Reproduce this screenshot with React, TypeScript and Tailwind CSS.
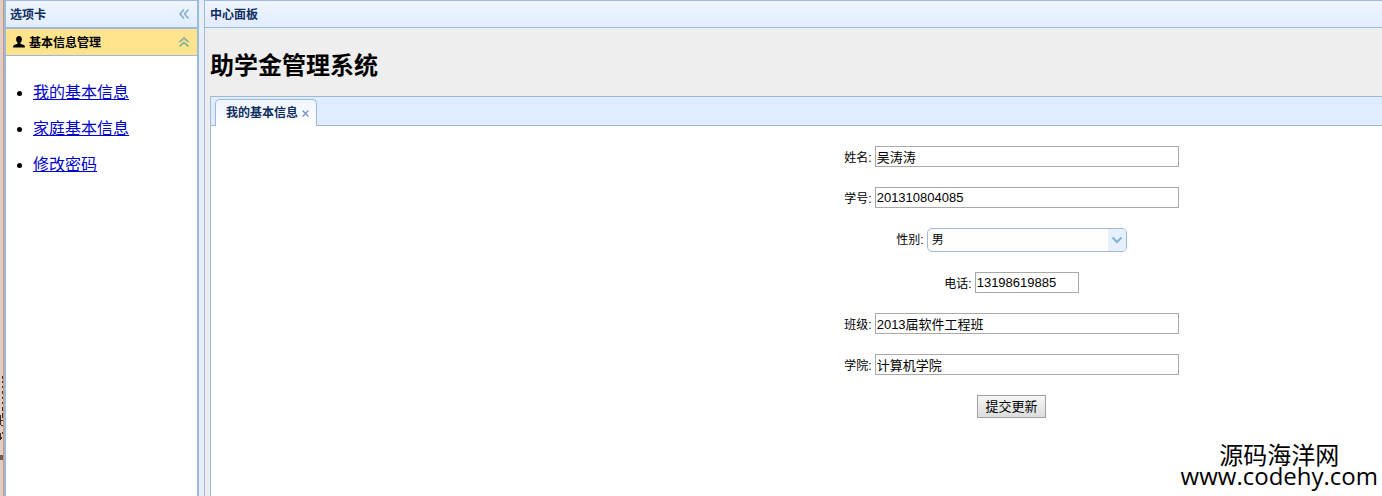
import { useState } from "react";

interface Field {
  id: string;
  label: string;
  value: string;
  short?: boolean;
}

const links = ["我的基本信息", "家庭基本信息", "修改密码"];

const topFields: Field[] = [
  { id: "name", label: "姓名:", value: "吴涛涛" },
  { id: "number", label: "学号:", value: "201310804085" },
];

const bottomFields: Field[] = [
  { id: "phone", label: "电话:", value: "13198619885", short: true },
  { id: "class", label: "班级:", value: "2013届软件工程班" },
  { id: "college", label: "学院:", value: "计算机学院" },
];

function TextField({ id, label, value, short }: Field) {
  return (
    <div className="flex items-center gap-[3px]">
      <label htmlFor={id} className="pt-0.5">
        {label}
      </label>
      <input
        id={id}
        type="text"
        defaultValue={value}
        className={`h-[21px] border border-[#a9a9a9] bg-white px-px text-[13px] leading-4 ${
          short ? "w-[104px]" : "w-[304px]"
        }`}
      />
    </div>
  );
}

// Sliver of the window behind the left panel
function Backdrop() {
  return (
    <div className="w-1 shrink-0 border-r border-[#d9916f] bg-[#dccfc8]">
      <svg width="3" height="496" viewBox="0 0 3 496" className="block">
        <path
          d="M2 376h1v3h-1zM2 381h1v2h-1zM2 386h1v2h-1zM2 391h1v3h-1zM2 397h1v2h-1zM2 402h1v2h-1zM2 407h1v4h-1zM0 415h1v10h-1zM2 413h1v5h-1zM1 420h2v1h-2zM1 425h2v1h-2zM0 433h1v7h-1zM2 432h1v2h-1zM1 437h1v2h-1z"
          fill="#38302e"
        />
        <path d="M0 455h3v5h-3z" fill="#6c5d58" />
      </svg>
    </div>
  );
}

export default function App() {
  const [gender, setGender] = useState("男");

  return (
    <div className="relative flex h-screen overflow-hidden bg-[#e6eef8] font-['Liberation_Sans','Noto_Sans_CJK_SC',sans-serif] text-xs text-black">
      <Backdrop />

      <aside className="flex w-[195px] shrink-0 flex-col border-x-2 border-t border-[#9db9dc] bg-white">
        <header className="flex h-[27px] shrink-0 items-center justify-between border-b border-[#9db9dc] bg-linear-to-b from-[#eff5ff] to-[#e0ecff] pr-[7px] pl-1 font-bold text-[#0e2d5f]">
          <h2 className="pt-0.5">选项卡</h2>
          <button type="button" aria-label="收起" className="text-[#7eabcd]">
            <svg width="12" height="12" viewBox="0 0 12 12" fill="none" stroke="currentColor" strokeWidth="1.5">
              <path d="M6 1.5 2 6l4 4.5M10.5 1.5l-4 4.5 4 4.5" />
            </svg>
          </button>
        </header>
        <div className="flex h-7 shrink-0 items-center border-y border-[#9db9dc] bg-[#ffe48d] pr-2 pl-[7px] font-bold">
          <svg width="12" height="12" viewBox="0 0 12 12" fill="#000">
            <path d="M6 0C4.100 0 3.100 1.300 3.100 3.200c0 1.500.6 2.700 1.500 3.500v1L1.100 9.100Q0 9.600 0 11.500h12q0-1.900-1.100-2.400L7.400 7.700v-1c.9-.8 1.500-2 1.500-3.500C8.900 1.300 7.900 0 6 0Z" />
          </svg>
          <h3 className="ml-1 flex-1 pt-0.5">基本信息管理</h3>
          <button type="button" aria-label="折叠" className="text-[#7da99b]">
            <svg width="10" height="10" viewBox="0 0 10 10" fill="none" stroke="currentColor" strokeWidth="1.5">
              <path d="M.5 5 5 1l4.500 4M.5 9.500 5 5.500l4.500 4" />
            </svg>
          </button>
        </div>
        <nav className="pt-[25px] pl-[27px]">
          <ul className="list-disc text-base leading-6">
            {links.map((link) => (
              <li key={link} className="mb-3">
                <a href="#" className="text-[#0000cc] underline">
                  {link}
                </a>
              </li>
            ))}
          </ul>
        </nav>
      </aside>

      <main className="ml-[5px] flex min-w-0 flex-1 flex-col border-t border-l border-[#9db9dc] bg-[#eeeeee]">
        <header className="flex h-[27px] shrink-0 items-center border-b border-[#9db9dc] bg-linear-to-b from-[#eff5ff] to-[#e0ecff] pl-[5px] font-bold text-[#0e2d5f]">
          <h2 className="pt-0.5">中心面板</h2>
        </header>
        <h1 className="pt-6 pb-4 pl-[5px] text-2xl leading-7 font-bold">
          助学金管理系统
        </h1>

        <section className="ml-[5px] flex flex-1 flex-col border-t border-l border-[#9db9dc] bg-white">
          <div className="flex h-[29px] shrink-0 items-end border-b border-[#9db9dc] bg-[#e0ecff] pl-1">
            <div className="-mb-px flex h-[27px] items-center gap-1 rounded-t-[5px] border border-b-0 border-[#9db9dc] bg-linear-to-b from-[#eff5ff] to-white pr-[7px] pl-[10px] font-bold text-[#0e2d5f]">
              <button type="button">我的基本信息</button>
              <button type="button" aria-label="关闭" className="text-[#6f8fc4]">
                <svg width="7" height="7" viewBox="0 0 7 7" stroke="currentColor" strokeWidth="1.200">
                  <path d="m.5.5 6 6M6.500.5l-6 6" />
                </svg>
              </button>
            </div>
          </div>

          <form
            onSubmit={(e) => e.preventDefault()}
            className="flex flex-col items-center gap-5 pt-5 pl-[430px]"
          >
            {topFields.map((f) => (
              <TextField key={f.id} {...f} />
            ))}

            <div className="flex items-center gap-[3px]">
              <label htmlFor="gender">性别:</label>
              <div className="relative">
                <select
                  id="gender"
                  value={gender}
                  onChange={(e) => setGender(e.target.value)}
                  className="block h-6 w-[200px] appearance-none rounded-[5px] border border-[#9db9dc] bg-white px-1 text-xs"
                >
                  <option>男</option>
                  <option>女</option>
                </select>
                <span className="pointer-events-none absolute inset-y-px right-px flex w-[18px] items-center justify-center rounded-r-[4px] bg-[#e6f0fc] text-[#7eb3d3]">
                  <svg width="12" height="8" viewBox="0 0 12 8" fill="none" stroke="currentColor" strokeWidth="2">
                    <path d="m1.500 1.500 4.500 4.500 4.500-4.500" />
                  </svg>
                </span>
              </div>
            </div>

            {bottomFields.map((f) => (
              <TextField key={f.id} {...f} />
            ))}

            <button
              type="submit"
              className="h-[23px] border border-[#a0a0a0] bg-linear-to-b from-[#f6f6f6] to-[#dddddd] px-[7px] text-[13px] leading-4"
            >
              提交更新
            </button>
          </form>
        </section>
      </main>

      <div className="pointer-events-none absolute right-1 bottom-[10px] text-center font-['Open_Sans','Noto_Sans_CJK_SC',sans-serif] text-2xl leading-[21px]">
        <p>源码海洋网</p>
        <p>www.codehy.com</p>
      </div>
    </div>
  );
}
